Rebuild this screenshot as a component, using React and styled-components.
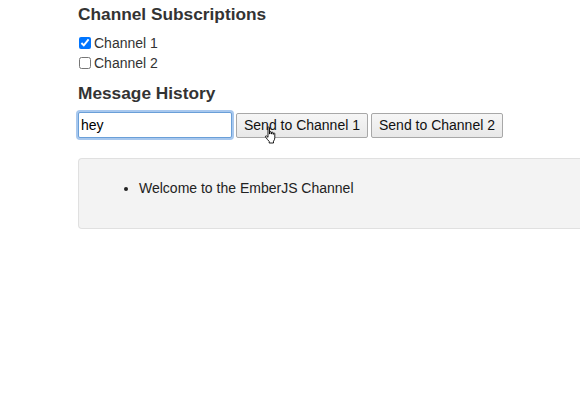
import styled, { createGlobalStyle } from 'styled-components';

const GlobalStyle = createGlobalStyle`
  html, body {
    margin: 0;
    padding: 0;
    background: #fff;
    overflow: hidden;
  }
  body {
    font-family: "Liberation Sans", Arial, sans-serif;
    font-size: 14px;
    color: #333;
  }
`;

const Page = styled.div`
  padding: 0 0 0 78px;
  width: 580px;
  box-sizing: border-box;
`;

const Heading = styled.h3`
  margin: ${(p) => p.$top}px 0 0;
  font-size: 17.3px;
  font-weight: bold;
  line-height: 28px;
  color: #333;
`;

const Subscriptions = styled.div`
  display: flex;
  flex-direction: column;
  margin-top: 5px;
`;

const CheckRow = styled.label`
  display: flex;
  align-items: center;
  height: 20px;
  font-size: 14px;
  color: #333;

  input {
    margin: 0 3px 0 1px;
    width: 12px;
    height: 12px;
  }
`;

const Composer = styled.div`
  display: flex;
  align-items: center;
  gap: 3px;
  margin-top: 5px;
  position: relative;
`;

const MessageInput = styled.input`
  width: 154px;
  height: 26px;
  box-sizing: border-box;
  border: 1px solid #6a9fd8;
  border-radius: 2px;
  box-shadow: 0 0 0 2px #a8c8ee;
  padding: 0 2px;
  font-family: "Liberation Sans", Arial, sans-serif;
  font-size: 14px;
  color: #000;
  outline: none;
`;

const SendButton = styled.button`
  height: 25px;
  box-sizing: border-box;
  padding: 0 7px;
  border: 1px solid #a8a8a8;
  border-radius: 2px;
  background: linear-gradient(#f6f6f6, #e8e8e8);
  font-family: "Liberation Sans", Arial, sans-serif;
  font-size: 14px;
  color: #111;
  margin-left: ${(p) => p.$gap || 0}px;
`;

const Pointer = styled.svg`
  position: absolute;
  left: 186px;
  top: 14px;
  pointer-events: none;
`;

const Well = styled.div`
  margin-top: 20px;
  min-height: 71px;
  box-sizing: border-box;
  width: 520px;
  background: #f3f3f3;
  border: 1px solid #e0e0e0;
  border-right: none;
  border-radius: 4px 0 0 4px;
  padding: 19px 0;
`;

const History = styled.ul`
  margin: 0;
  padding-left: 60px;
  font-size: 14px;
  line-height: 20px;
  color: #222;
`;

const channels = [
  { name: 'Channel 1', subscribed: true },
  { name: 'Channel 2', subscribed: false },
];

const messages = ['Welcome to the EmberJS Channel'];

function HandCursor() {
  return (
    <Pointer width="14" height="18" viewBox="0 0 14 18">
      <path
        d="M4 1.5c0-.8 1.5-.8 1.5 0V8h.3V6.2c0-.8 1.5-.8 1.5 0V8h.3V6.8c0-.8 1.5-.8 1.5 0V8.3h.3V7.6c0-.8 1.4-.8 1.4 0v4.2c0 1.6-.6 2.5-1.3 3.4V17H5.2v-1.6C4 14.3 2.6 12.6 1.6 11c-.5-.8.4-1.6 1.1-.9L4 11.3z"
        fill="#fff"
        stroke="#000"
        strokeWidth="0.9"
        strokeLinejoin="round"
      />
    </Pointer>
  );
}

export default function App() {
  return (
    <Page>
      <GlobalStyle />
      <Heading $top={0}>Channel Subscriptions</Heading>
      <Subscriptions>
        {channels.map((c) => (
          <CheckRow key={c.name}>
            <input type="checkbox" defaultChecked={c.subscribed} />
            {c.name}
          </CheckRow>
        ))}
      </Subscriptions>
      <Heading $top={6}>Message History</Heading>
      <Composer>
        <MessageInput defaultValue="hey" />
        <SendButton $gap={1}>Send to Channel 1</SendButton>
        <SendButton>Send to Channel 2</SendButton>
        <HandCursor />
      </Composer>
      <Well>
        <History>
          {messages.map((m) => (
            <li key={m}>{m}</li>
          ))}
        </History>
      </Well>
    </Page>
  );
}
